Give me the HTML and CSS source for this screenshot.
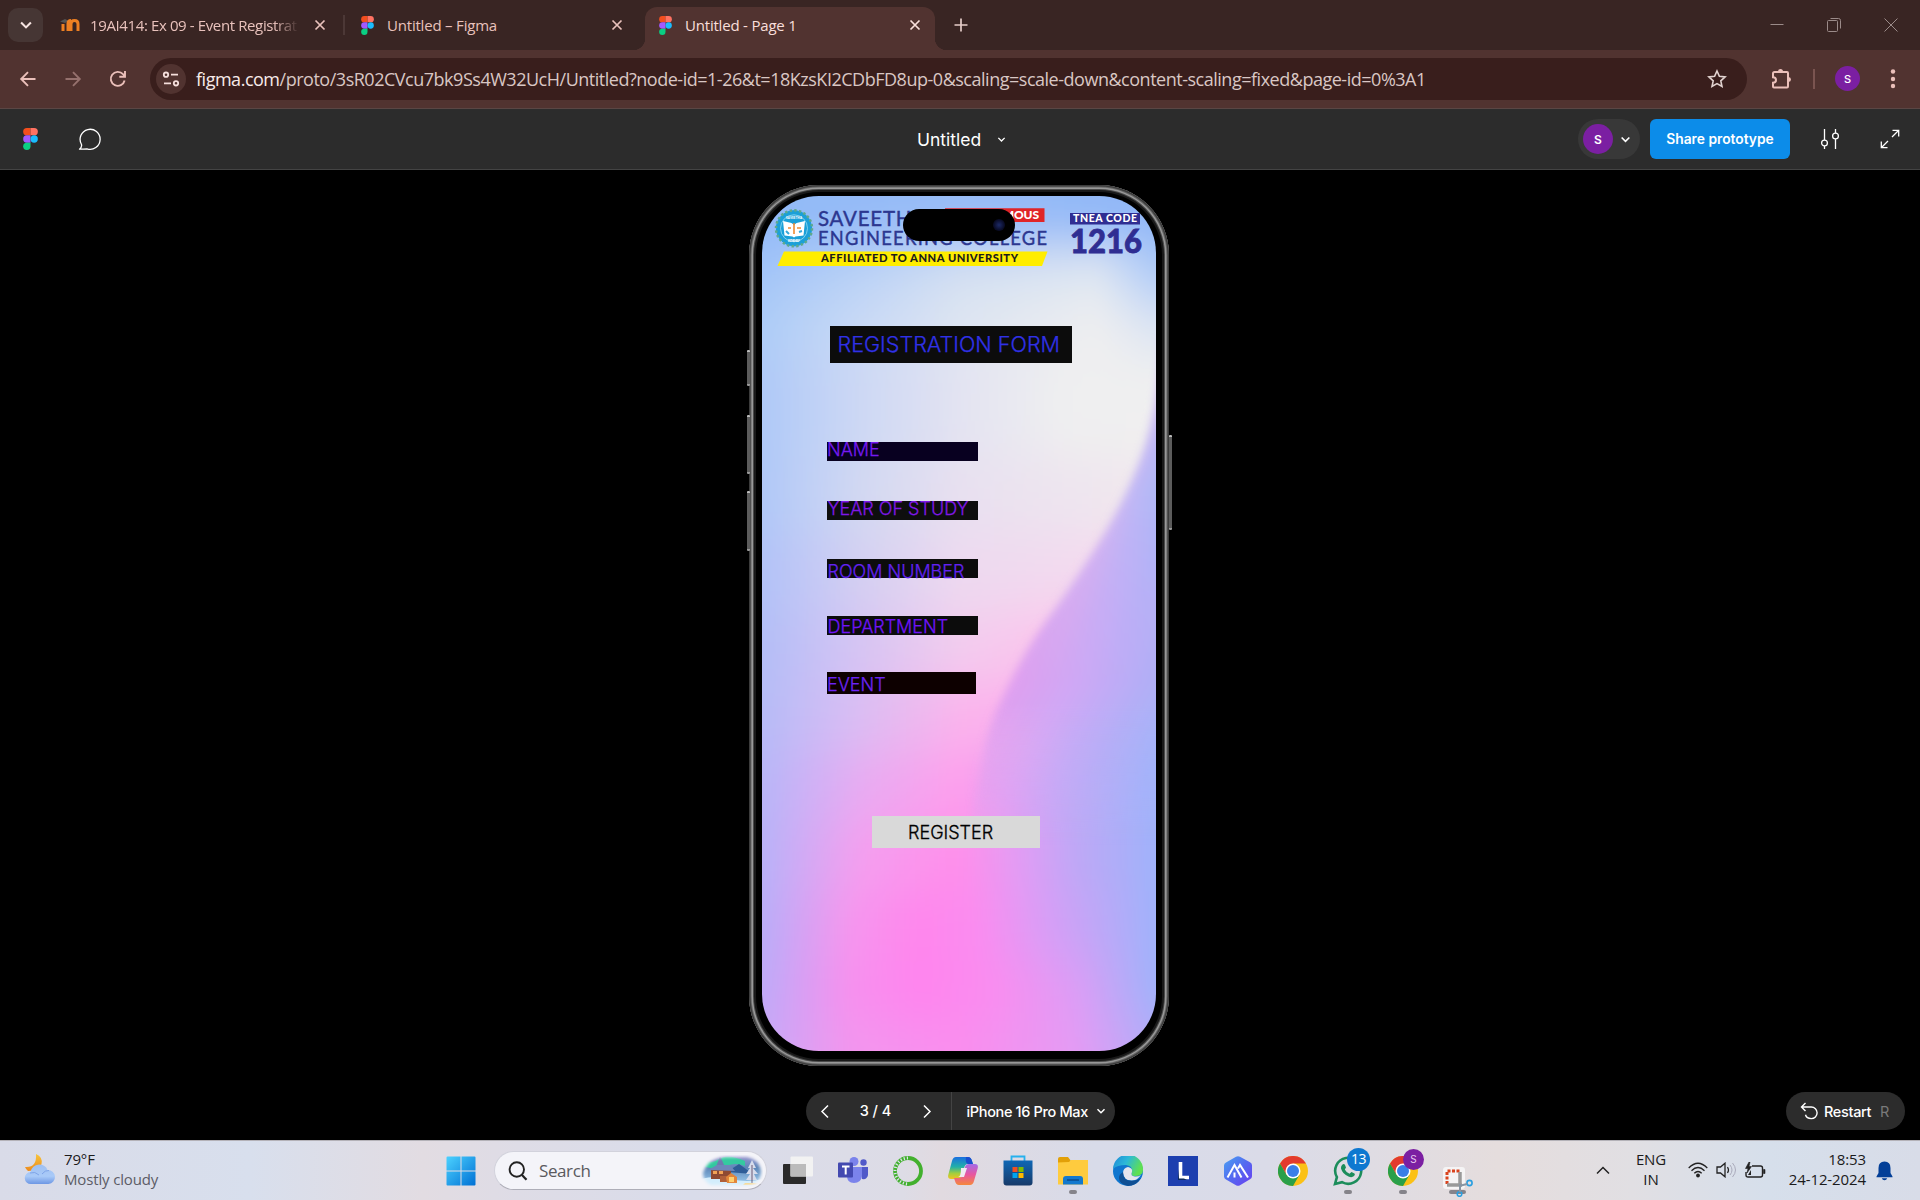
FILE: index.html
```html
<!DOCTYPE html>
<html lang="en">
<head>
<meta charset="utf-8">
<title>Untitled - Page 1</title>
<link rel="stylesheet" href="styles.css">
</head>
<body>
<svg class="defs" width="0" height="0" aria-hidden="true">
  <symbol id="figma" viewBox="0 0 14 21">
    <path d="M3.500 0H7v7H3.500a3.500 3.500 0 0 1 0-7z" fill="#f24e1e"/>
    <path d="M7 0h3.500a3.500 3.500 0 0 1 0 7H7z" fill="#ff7262"/>
    <path d="M3.500 7H7v7H3.500a3.500 3.500 0 0 1 0-7z" fill="#a259ff"/>
    <circle cx="10.500" cy="10.500" r="3.500" fill="#1abcfe"/>
    <path d="M3.500 14H7v3.500a3.500 3.500 0 1 1-3.500-3.500z" fill="#0acf83"/>
  </symbol>
  <symbol id="close" viewBox="0 0 12 12"><path d="M1.500 1.500l9 9M10.500 1.500l-9 9" stroke="currentColor" stroke-width="1.700" fill="none"/></symbol>
  <symbol id="chev" viewBox="0 0 10 10"><path d="M1.500 3.200L5 6.700l3.500-3.500" stroke="currentColor" stroke-width="1.500" fill="none"/></symbol>
  <symbol id="chrome" viewBox="0 0 30 30">
    <circle cx="15" cy="15" r="15" fill="#fbc116"/>
    <path d="M2 7.500A15 15 0 0 1 28 7.500H15L8.500 18.700z" fill="#e33b2e"/>
    <path d="M2 7.500L8.500 18.700 21.500 18.700 15 30A15 15 0 0 1 2 7.500z" fill="#2a9f49"/>
    <circle cx="15" cy="15" r="7.500" fill="#fff"/><circle cx="15" cy="15" r="6" fill="#3a7ee8"/>
  </symbol>
</svg>

<header class="tabs">
  <button class="tab-search"><svg width="14" height="14"><use href="#chev"/></svg></button>
  <div class="tab tab-one">
    <svg class="fav" width="20" height="14" viewBox="0 0 20 14"><path d="M0 3.500L5 1l4 2-4 2z" fill="#555"/><path d="M3 13V6M8 13V5.500q0-3 3-3M11 13V6q0-3.500 3.500-3.500T18 6v7" stroke="#ef8022" stroke-width="3" fill="none"/></svg>
    <span class="title fade">19AI414: Ex 09 - Event Registrat</span>
    <svg class="x" width="12" height="12"><use href="#close"/></svg>
  </div>
  <i class="tab-sep"></i>
  <div class="tab tab-two">
    <svg width="13" height="19"><use href="#figma"/></svg>
    <span class="title">Untitled – Figma</span>
    <svg class="x" width="12" height="12"><use href="#close"/></svg>
  </div>
  <div class="tab active">
    <svg width="13" height="19"><use href="#figma"/></svg>
    <span class="title">Untitled - Page 1</span>
    <svg class="x" width="12" height="12"><use href="#close"/></svg>
  </div>
  <svg class="plus" width="14" height="14" viewBox="0 0 14 14"><path d="M7 0.500v13M0.500 7h13" stroke="currentColor" stroke-width="1.700"/></svg>
  <div class="win">
    <svg width="14" height="14" viewBox="0 0 14 14"><path d="M0.500 6.500h13" stroke="currentColor"/></svg>
    <svg width="14" height="14" viewBox="0 0 14 14"><path d="M0.500 3.500q0-1 1-1h8q1 0 1 1v9q0 1-1 1h-8q-1 0-1-1zM3.500 0.500h8q2 0 2 2v8" stroke="currentColor" fill="none"/></svg>
    <svg width="14" height="14" viewBox="0 0 14 14"><path d="M0.500 0.500l13 13M13.500 0.500l-13 13" stroke="currentColor"/></svg>
  </div>
</header>

<nav class="toolbar">
  <svg class="nav-ic" width="18" height="18" viewBox="0 0 18 18"><path d="M16.500 9H2.500M9 2.200L2.200 9 9 15.800" stroke="currentColor" stroke-width="1.900" fill="none"/></svg>
  <svg class="nav-ic dim" width="18" height="18" viewBox="0 0 18 18"><path d="M1.500 9h14M9 2.200L15.800 9 9 15.800" stroke="currentColor" stroke-width="1.900" fill="none"/></svg>
  <svg class="nav-ic" width="18" height="18" viewBox="0 0 18 18"><path d="M15.600 10.500A7 7 0 1 1 14 4.200L15.700 6M16 1v5.700h-5.700" stroke="currentColor" stroke-width="1.900" fill="none"/></svg>
  <div class="omnibox">
    <span class="site"><svg width="18" height="16" viewBox="0 0 18 16"><g stroke="currentColor" stroke-width="1.800" fill="none"><circle cx="4" cy="3.700" r="2.200"/><path d="M9 3.700h7M2 12.300h7"/><circle cx="14" cy="12.300" r="2.200"/></g></svg></span>
    <span class="url"><b>figma.com</b>/proto/3sR02CVcu7bk9Ss4W32UcH/Untitled?node-id=1-26&amp;t=18KzsKI2CDbFD8up-0&amp;scaling=scale-down&amp;content-scaling=fixed&amp;page-id=0%3A1</span>
    <svg class="star" width="20" height="20" viewBox="0 0 20 20"><path d="M10 2l2.400 5.300 5.700.6-4.300 3.900 1.200 5.700-5-2.900-5 2.900 1.200-5.700L1.900 7.900l5.700-.6z" stroke="currentColor" stroke-width="1.600" fill="none"/></svg>
  </div>
  <svg class="puzzle" width="22" height="22" viewBox="0 0 22 22"><path d="M3 5.500q0-1.500 1.500-1.500h12.500q1 0 1 1v13.500q0 1-1 1H4q-1 0-1-1v-3.700q3 0 3-2.800t-3-2.800z" stroke="currentColor" stroke-width="2" fill="none"/><path d="M8 3.500a2.500 2.500 0 0 1 5 0zM18.500 9a2.500 2.500 0 0 1 0 5z" fill="currentColor"/></svg>
  <i class="tool-sep"></i>
  <span class="avatar small">S</span>
  <svg class="dots" width="6" height="20" viewBox="0 0 6 20" fill="currentColor"><circle cx="3" cy="2.500" r="2.200"/><circle cx="3" cy="10" r="2.200"/><circle cx="3" cy="17" r="2.200"/></svg>
</nav>

<section class="figbar">
  <div class="fig-left">
    <svg width="15" height="22"><use href="#figma"/></svg>
    <svg width="24" height="24" viewBox="0 0 24 24"><path d="M1.500 22.200q2.800-2.500 1.900-5A10 10 0 1 1 9 21.800q-3 .2-7.500.4z" stroke="#fff" stroke-width="1.300" fill="none" stroke-linejoin="round"/></svg>
  </div>
  <div class="fig-title">Untitled <svg width="9" height="9"><use href="#chev"/></svg></div>
  <div class="fig-right">
    <div class="user"><span class="avatar">S</span><svg width="11" height="11"><use href="#chev"/></svg></div>
    <button class="share">Share prototype</button>
    <svg class="sliders" width="20" height="22" viewBox="0 0 20 22"><g stroke="#fff" stroke-width="1.300" fill="none"><path d="M4.500 1v11M4.500 18v3M15.500 1v4M15.500 11v10"/><circle cx="4.500" cy="15" r="2.900"/><circle cx="15.500" cy="8" r="2.900"/></g></svg>
    <svg width="20" height="20" viewBox="0 0 20 20"><path d="M12 8l6.500-6.500M12.500 1.300h6.200v6.200M8 12l-6.500 6.500M1.300 12.500v6.200h6.200" stroke="#fff" stroke-width="1.300" fill="none"/></svg>
  </div>
</section>

<main class="stage">
  <div class="phone">
    <i class="key k1"></i><i class="key k2"></i><i class="key k3"></i><i class="key k4"></i>
    <div class="screen">
      <svg class="wall" width="394" height="856" viewBox="0 0 394 856" preserveAspectRatio="none">
        <defs>
          <filter id="rowblur" filterUnits="userSpaceOnUse" x="-40" y="-200" width="480" height="1260"><feGaussianBlur stdDeviation="10 24"/></filter>
          <filter id="edge" filterUnits="userSpaceOnUse" x="100" y="50" width="400" height="700"><feGaussianBlur stdDeviation="4"/></filter>
          <linearGradient id="r0" gradientUnits="userSpaceOnUse" x1="0" x2="394"><stop offset="0" stop-color="#91b9f8"/><stop offset=".5" stop-color="#98bcf7"/><stop offset="1" stop-color="#8fb6f8"/></linearGradient>
          <linearGradient id="r1" gradientUnits="userSpaceOnUse" x1="0" x2="394"><stop offset="0" stop-color="#a3c5f8"/><stop offset=".25" stop-color="#bad2f6"/><stop offset=".5" stop-color="#d4e0f2"/><stop offset=".85" stop-color="#dfe7f2"/><stop offset="1" stop-color="#b0ccf7"/></linearGradient>
          <linearGradient id="r2" gradientUnits="userSpaceOnUse" x1="0" x2="394"><stop offset="0" stop-color="#aecdf8"/><stop offset=".25" stop-color="#cadaf5"/><stop offset=".5" stop-color="#dee5f2"/><stop offset=".85" stop-color="#eeeef0"/><stop offset="1" stop-color="#dde5f3"/></linearGradient>
          <linearGradient id="r3" gradientUnits="userSpaceOnUse" x1="0" x2="394"><stop offset="0" stop-color="#afc9f8"/><stop offset=".25" stop-color="#cdd8f4"/><stop offset=".5" stop-color="#e3e3f2"/><stop offset=".78" stop-color="#efeff0"/><stop offset="1" stop-color="#f0f0f0"/></linearGradient>
          <linearGradient id="r4" gradientUnits="userSpaceOnUse" x1="0" x2="394"><stop offset="0" stop-color="#b0c8f8"/><stop offset=".25" stop-color="#d2d8f2"/><stop offset=".5" stop-color="#e8e0f0"/><stop offset="1" stop-color="#f2e8ee"/></linearGradient>
          <linearGradient id="r5" gradientUnits="userSpaceOnUse" x1="0" x2="394"><stop offset="0" stop-color="#b2c2f8"/><stop offset=".25" stop-color="#d4cff2"/><stop offset=".5" stop-color="#edd9f0"/><stop offset="1" stop-color="#f8daee"/></linearGradient>
          <linearGradient id="r6" gradientUnits="userSpaceOnUse" x1="0" x2="394"><stop offset="0" stop-color="#b3bef7"/><stop offset=".25" stop-color="#d6c4f3"/><stop offset=".5" stop-color="#f2ccee"/><stop offset=".75" stop-color="#fdc4ec"/><stop offset=".88" stop-color="#d0b8f4"/><stop offset="1" stop-color="#a3b4fa"/></linearGradient>
          <linearGradient id="r7" gradientUnits="userSpaceOnUse" x1="0" x2="394"><stop offset="0" stop-color="#b6bbf7"/><stop offset=".25" stop-color="#dbbdf3"/><stop offset=".5" stop-color="#fab4ec"/><stop offset=".64" stop-color="#fcb0ec"/><stop offset=".78" stop-color="#c8acf5"/><stop offset="1" stop-color="#a3b2fa"/></linearGradient>
          <linearGradient id="r8" gradientUnits="userSpaceOnUse" x1="0" x2="394"><stop offset="0" stop-color="#b8b6f8"/><stop offset=".25" stop-color="#e7abf2"/><stop offset=".5" stop-color="#fe9fec"/><stop offset=".62" stop-color="#e8a0f2"/><stop offset=".75" stop-color="#cba8f6"/><stop offset="1" stop-color="#a3b2fa"/></linearGradient>
          <linearGradient id="r9" gradientUnits="userSpaceOnUse" x1="0" x2="394"><stop offset="0" stop-color="#b8b2f8"/><stop offset=".25" stop-color="#f49fef"/><stop offset=".5" stop-color="#ff8eea"/><stop offset=".65" stop-color="#e29cf4"/><stop offset=".8" stop-color="#bda8f6"/><stop offset="1" stop-color="#9fb2fa"/></linearGradient>
          <linearGradient id="r10" gradientUnits="userSpaceOnUse" x1="0" x2="394"><stop offset="0" stop-color="#b9adf8"/><stop offset=".22" stop-color="#f596ee"/><stop offset=".4" stop-color="#ff86ec"/><stop offset=".55" stop-color="#fa8cf0"/><stop offset=".7" stop-color="#dc9cf5"/><stop offset="1" stop-color="#a0b2fa"/></linearGradient>
          <linearGradient id="r11" gradientUnits="userSpaceOnUse" x1="0" x2="394"><stop offset="0" stop-color="#bfaaf8"/><stop offset=".22" stop-color="#f690ee"/><stop offset=".4" stop-color="#ff84ee"/><stop offset=".6" stop-color="#f98df0"/><stop offset=".8" stop-color="#dc9df5"/><stop offset="1" stop-color="#a0b2fa"/></linearGradient>
          <linearGradient id="r12" gradientUnits="userSpaceOnUse" x1="0" x2="394"><stop offset="0" stop-color="#c8a9f7"/><stop offset=".22" stop-color="#f296ee"/><stop offset=".5" stop-color="#fa8eee"/><stop offset=".8" stop-color="#e49bf4"/><stop offset="1" stop-color="#b4acf8"/></linearGradient>
          <linearGradient id="side" gradientUnits="userSpaceOnUse" x1="240" y1="500" x2="390" y2="580"><stop offset="0" stop-color="#e09fef"/><stop offset=".35" stop-color="#cfa8f5"/><stop offset=".7" stop-color="#b4aef6"/><stop offset="1" stop-color="#a2b4f9"/></linearGradient>
          <linearGradient id="sidetop" gradientUnits="userSpaceOnUse" x1="345" y1="330" x2="396" y2="350"><stop offset="0" stop-color="#cbb8f2"/><stop offset=".45" stop-color="#b6b8f6"/><stop offset="1" stop-color="#a6b8f8"/></linearGradient>
          <linearGradient id="topfade" x1="0" y1="0" x2="0" y2="1"><stop offset="0" stop-color="#fff"/><stop offset=".5" stop-color="#fff"/><stop offset="1" stop-color="#000"/></linearGradient>
          <mask id="tm"><rect x="180" y="100" width="260" height="390" fill="url(#topfade)"/></mask>
          <linearGradient id="fadey" x1="0" y1="0" x2="0" y2="1"><stop offset="0" stop-color="#fff"/><stop offset=".74" stop-color="#fff"/><stop offset="1" stop-color="#000"/></linearGradient>
          <mask id="fade"><rect x="180" y="100" width="260" height="550" fill="url(#fadey)"/></mask>
        </defs>
        <g filter="url(#rowblur)">
          <rect x="-60" y="-200" width="520" height="252" fill="url(#r0)"/>
          <rect x="-60" y="50" width="520" height="57" fill="url(#r1)"/>
          <rect x="-60" y="105" width="520" height="57" fill="url(#r2)"/>
          <rect x="-60" y="160" width="520" height="102" fill="url(#r3)"/>
          <rect x="-60" y="260" width="520" height="82" fill="url(#r4)"/>
          <rect x="-60" y="340" width="520" height="77" fill="url(#r5)"/>
          <rect x="-60" y="415" width="520" height="72" fill="url(#r6)"/>
          <rect x="-60" y="485" width="520" height="72" fill="url(#r7)"/>
          <rect x="-60" y="555" width="520" height="72" fill="url(#r8)"/>
          <rect x="-60" y="625" width="520" height="72" fill="url(#r9)"/>
          <rect x="-60" y="695" width="520" height="72" fill="url(#r10)"/>
          <rect x="-60" y="765" width="520" height="62" fill="url(#r11)"/>
          <rect x="-60" y="825" width="520" height="240" fill="url(#r12)"/>
        </g>
        <g mask="url(#fade)"><g filter="url(#edge)">
          <path d="M400 140C397 200 390 235 376 270S345 335 326 364Q306 396 285 424T240 503Q226 530 222 560L212 610V660H450V140z" fill="url(#side)"/>
          <path d="M400 140C397 200 390 235 376 270S345 335 326 364Q306 396 285 424L260 465V490H450V140z" fill="url(#sidetop)" mask="url(#tm)"/>
        </g></g>
      </svg>
      <svg class="banner" width="394" height="80" viewBox="762 196 394 80">
        <circle cx="794" cy="228.300" r="17.600" fill="#1ba0d8" stroke="#1ba0d8"/>
        <circle cx="794" cy="228.300" r="18" fill="none" stroke="#5fa98c" stroke-width="2.500" stroke-dasharray="2.350 2.350"/>
        <circle cx="794" cy="228.300" r="13.500" fill="none" stroke="#9adcf2" stroke-width=".8"/>
        <path d="M783 221l8.500 2 2.500 2 2.500-2 8.500-2-1.500 14.500-8 1-1.500 1-1.500-1-8-1z" fill="#fff"/>
        <path d="M794 223v11M788 228h3M797 228h4" stroke="#ee8a33" stroke-width="1.600"/><path d="M786 231l3 3M799 232l3-1" stroke="#38a8d8" stroke-width="2"/>
        <text x="786" y="218.500" class="seal" textLength="16">SAVEETHA</text><text x="788" y="241.500" class="seal" textLength="12">IN THE HELP</text>
        <text x="818" y="226" class="college" textLength="108" lengthAdjust="spacing">SAVEETHA</text>
        <text x="818" y="245" class="college second" textLength="229" lengthAdjust="spacing">ENGINEERING COLLEGE</text>
        <path d="M945 208.300h99.500v13.700H945z" fill="#e02528"/>
        <text x="951" y="219.300" class="auto" textLength="88">AUTONOMOUS</text>
        <path d="M784 251.500h263.500l-5.500 14.500H777.500z" fill="#ffed00"/>
        <text x="821" y="262.300" class="affil" textLength="197" lengthAdjust="spacing">AFFILIATED TO ANNA UNIVERSITY</text>
        <path d="M1070 213h70v11.500h-70z" fill="#2f2d92"/>
        <text x="1073" y="222.200" class="tnea" textLength="64">TNEA CODE</text>
        <text x="1070" y="252.600" class="code" textLength="72" lengthAdjust="spacingAndGlyphs">1216</text>
      </svg>
      <h1 class="form-title">REGISTRATION FORM</h1>
      <div class="field name">NAME</div>
      <div class="field year">YEAR OF STUDY</div>
      <div class="field room">ROOM NUMBER</div>
      <div class="field dept">DEPARTMENT</div>
      <div class="field event">EVENT</div>
      <div class="register">REGISTER</div>
      <div class="island"><i></i></div>
    </div>
  </div>
  <footer class="controls">
    <span></span>
    <div class="pager">
      <svg width="18" height="18" viewBox="0 0 18 18"><path d="M12 3.500L6 9.500l6 6" stroke="#fff" stroke-width="1.500" fill="none"/></svg>
      <span class="count">3 / 4</span>
      <svg width="18" height="18" viewBox="0 0 18 18"><path d="M6 3.500l6 6-6 6" stroke="#fff" stroke-width="1.500" fill="none"/></svg>
      <div class="device">iPhone 16 Pro Max <svg width="10" height="10"><use href="#chev"/></svg></div>
    </div>
    <div class="restart"><svg width="19" height="18" viewBox="0 0 19 18"><path d="M5.500 1L1.500 5l4 4M1.500 5h9.800a5.800 5.800 0 0 1 0 11.600q-4.800 0-5.800-3.800" stroke="#fff" stroke-width="1.400" fill="none"/></svg><span>Restart</span><em>R</em></div>
  </footer>
</main>

<footer class="taskbar">
  <div class="weather">
    <svg width="32" height="32" viewBox="0 0 32 32">
      <defs><linearGradient id="cl" x2="0" y2="1"><stop stop-color="#9fc0f2"/><stop offset=".6" stop-color="#a9caf8"/><stop offset="1" stop-color="#6d97e4"/></linearGradient><linearGradient id="mn" x2="0" y2="1"><stop stop-color="#f8c53a"/><stop offset="1" stop-color="#ec8a1e"/></linearGradient></defs>
      <path d="M12 1q7 3 5.500 10T4 18q-2-1.500-3-4 12 1 11-13z" fill="url(#mn)"/>
      <path d="M7 31a6 6 0 0 1-.5-12q1.500-7 8.500-7.500 6.500 0 8.500 5.500a6.800 6.800 0 0 1 1 14z" fill="url(#cl)"/><path d="M6 20q5-2 9 2M18 21q3-4 7-3.500" stroke="#7fa5e8" fill="none"/>
    </svg>
    <div><span class="temp">79°F</span><span class="sky">Mostly cloudy</span></div>
  </div>
  <div class="apps">
    <svg class="start" width="30" height="30" viewBox="0 0 30 30"><defs><linearGradient id="wn" x2="1" y2="1"><stop stop-color="#4cd2ff"/><stop offset="1" stop-color="#0070d4"/></linearGradient></defs><path d="M.5 1.500q0-1 1-1h13v14H.5zM15.500.5h13q1 0 1 1v13h-14zM.5 15.500h14v14h-13q-1 0-1-1zM15.500 15.500h14v13q0 1-1 1h-13z" fill="url(#wn)"/></svg>
    <div class="search">
      <svg width="20" height="20" viewBox="0 0 20 20"><circle cx="8.800" cy="8.500" r="7.200" stroke="#222" stroke-width="1.900" fill="none"/><path d="M14 14l4.500 4.800" stroke="#222" stroke-width="2.200"/></svg>
      <span>Search</span>
      <svg class="art" width="62" height="32" viewBox="0 0 62 32">
        <defs>
          <linearGradient id="sk" x2="0" y2="1"><stop stop-color="#9d97d0"/><stop offset=".4" stop-color="#5c86b8"/><stop offset="1" stop-color="#a9d8f7"/></linearGradient>
          <filter id="soft"><feGaussianBlur stdDeviation="1.500"/></filter>
          <mask id="am"><path d="M8 8Q14 3 24 2h22q12 2 14 14 0 12-12 14H10Q2 26 2 18 4 12 8 8z" fill="#fff" filter="url(#soft)"/></mask>
        </defs>
        <g mask="url(#am)"><path d="M0 0h62v32H0z" fill="url(#sk)"/><path d="M4 4q6 6 14 0t26 2v5q-10-4-18 0T4 12z" fill="#29d49a" opacity=".85"/><path d="M26 17l12-8 14 10z" fill="#2f5d97"/><path d="M0 24q14-4 30 0t32 0v10H0z" fill="#d3edfc"/>
        <path d="M19 1l5 11h-9z" fill="#6f7bb0"/><path d="M10 14h20v10H10z" fill="#8f4a32"/><path d="M7 15l9-5h13l5 6z" fill="#6f86ba"/><path d="M12 16h4v3h-4zM18 16h4v3h-4z" fill="#f2a355"/><path d="M19 21h8v6h-8z" fill="#b0603a"/><path d="M25 22l5-4 6 4v6H26z" fill="#e2853a"/><path d="M28 22h5v5h-5z" fill="#ffd070"/><path d="M51 5l4 8h-3l5 6h-4l3 6H45l4-6h-4l4-6h-2z" fill="#d6dcec"/><path d="M51 10v18" stroke="#6d5b74"/><path d="M44 28h14l2 2H42z" fill="#f3d78e"/></g>
      </svg>
    </div>
    <div class="app"><svg width="30" height="30" viewBox="0 0 30 30"><rect y="8" width="23" height="20" rx="1" fill="#2a2a2a"/><rect x="7.500" y=".5" width="22.500" height="20" rx="1" fill="#f2f2f2"/><path d="M7.500 8H23v12.500H7.500z" fill="#bbb"/></svg></div>
    <div class="app"><svg width="30" height="30" viewBox="0 0 30 30"><circle cx="16" cy="5.500" r="4.500" fill="#7b83eb"/><circle cx="25.500" cy="6.500" r="3.200" fill="#5059c9"/><path d="M22 11h8v8q-1 5-6 4z" fill="#5059c9"/><path d="M9 11h15v9q-1 7-8 7t-7-7z" fill="#7b83eb"/><rect y="6.500" width="15" height="15" rx="1" fill="#4349b0"/><path d="M4 10.500h7.500M7.700 10.500v8" stroke="#fff" stroke-width="2"/></svg></div>
    <div class="app"><svg width="30" height="30" viewBox="0 0 30 30"><circle cx="15" cy="15" r="13" fill="none" stroke="#42b02e" stroke-width="3.800"/><path d="M15 2A13 13 0 0 0 15 28" fill="none" stroke="#dde2ec" stroke-width="3" stroke-dasharray="1.200 2"/></svg></div>
    <div class="app"><svg width="30" height="30" viewBox="0 0 30 30"><defs><linearGradient id="c1" x2="0" y2="1"><stop stop-color="#1b6fe0"/><stop offset=".45" stop-color="#22b0a8"/><stop offset=".75" stop-color="#a5cf3c"/><stop offset="1" stop-color="#f2c321"/></linearGradient><linearGradient id="c2" x2="0" y2="1"><stop stop-color="#a36be8"/><stop offset=".5" stop-color="#e856a0"/><stop offset="1" stop-color="#f5883c"/></linearGradient></defs><path d="M8 1h12q3 0 4 4l1 3h-5q-3 0-4 4l-2 8q-1 3-4 3H3q-4 0-2.500-5L4 5q1-4 4-4z" fill="url(#c1)"/><path d="M18 1h2q3 0 4 4l1 3h-5q-3-1-2-7z" fill="#1a4fcf"/><path d="M22 29H11q-3 0-4-4l-1-3h5q3 0 4-4l2-7q1-3 4-3h6q4 0 2.500 5L26 25q-1 4-4 4z" fill="url(#c2)"/><path d="M13 12h6l-3 9h-6q3 0 3-9z" fill="#f0ecf4"/></svg></div>
    <div class="app"><svg width="30" height="31" viewBox="0 0 30 31"><defs><linearGradient id="st" x2="0" y2="1"><stop stop-color="#0f67b5"/><stop offset="1" stop-color="#173a69"/></linearGradient></defs><path d="M8.500 6V1.500h13V6" stroke="#26b1ee" stroke-width="1.800" fill="none"/><path d="M.5 5.500h29v22q0 3-3 3h-23q-3 0-3-3z" fill="url(#st)"/><path d="M9.500 12h5v5h-5z" fill="#f25022"/><path d="M15.500 12h5v5h-5z" fill="#7fba00"/><path d="M9.500 18h5v5h-5z" fill="#00a4ef"/><path d="M15.500 18h5v5h-5z" fill="#ffb900"/></svg></div>
    <div class="app run"><svg width="30" height="28" viewBox="0 0 30 28"><path d="M0 2q0-2 2-2h8l3 4v6H0z" fill="#e2a008"/><path d="M0 5.500l11-.5 2-2h17v24.500H0z" fill="#fecb3e"/><path d="M5 27.500V22q0-3 3-3h14q3 0 3 3v5.500z" fill="#1379ce"/><path d="M9 23h12" stroke="#0b4b8c" stroke-width="1.500"/></svg></div>
    <div class="app"><svg width="30" height="30" viewBox="0 0 30 30"><defs><linearGradient id="e1" x2="1" y2=".4"><stop stop-color="#1f86d8"/><stop offset=".5" stop-color="#2cb8d8"/><stop offset="1" stop-color="#5fe052"/></linearGradient></defs><circle cx="15" cy="15" r="15" fill="#0f76cf"/><path d="M0 13A15 15 0 0 1 30 14q0 6-8 6-5 0-3-4 1-6-6-7-9 0-13 4z" fill="url(#e1)"/><path d="M10 17q0-5 5-6 5 1 4 5-2 4 3 4.500 4 0 6-1.500-4 6-10 5.500-7 0-8-7.500z" fill="#e4e4ee"/><path d="M10 16q0 9 9 8.700 5 0 9-2.700-5 8-13 8-9-2-9-8 0-4 4-6z" fill="#0f4f94"/></svg></div>
    <div class="app"><svg width="30" height="30" viewBox="0 0 30 30"><path d="M0 0h30v30H0z" fill="#1d3faf"/><path d="M12.500 6v15.500H21" stroke="#fff" stroke-width="3.600" fill="none"/><path d="M10 13v11h9l-3-1.500h-5z" fill="#0d2b5e"/></svg></div>
    <div class="app"><svg width="28" height="30" viewBox="0 0 28 30"><defs><linearGradient id="hx" x2="1" y2="1"><stop stop-color="#4aa2f2"/><stop offset=".5" stop-color="#546af0"/><stop offset="1" stop-color="#6a3df0"/></linearGradient></defs><path d="M12 .7q2-1 4 0l10 5.500q2 1 2 3v11q0 2-2 3l-10 6q-2 1-4 0L2 23.500q-2-1-2-3v-11q0-2 2-3z" fill="url(#hx)"/><path d="M3.500 21.500L10.500 9l7 12.500M14 12.500L16 9l8 12.500M10.500 21.500v-5" stroke="#fff" stroke-width="2" fill="none"/></svg></div>
    <div class="app"><svg width="30" height="30"><use href="#chrome"/></svg></div>
    <div class="app run"><svg width="30" height="30" viewBox="0 0 30 30"><path d="M2 28l1.900-6.800A13 13 0 1 1 9 26.200z" fill="none" stroke="#1c8d5b" stroke-width="2.600"/><path d="M9 9q2-2 3 0l1 2.500-1.200 2q1.500 3 4.700 4.300l2-1.800 3 1.500q1 1-.5 2.500-2 2-5.500.5-6-2.500-7.500-8-.3-2 1-3.500z" fill="#1c8d5b"/></svg><span class="badge blue">13</span></div>
    <div class="app run"><svg width="30" height="30"><use href="#chrome"/></svg><span class="badge purple">S</span></div>
    <div class="app run wide snip"><svg width="30" height="30" viewBox="0 0 30 30"><rect width="22" height="22" rx="3" fill="#f5f4f5"/><path d="M4 17V4h13" fill="none" stroke="#d9431e" stroke-width="3" stroke-dasharray="3 1.500"/><path d="M17 5v14M4 18h15" stroke="#999" stroke-width="3.500"/><circle cx="26.500" cy="16" r="2.600" fill="none" stroke="#2a9fe0" stroke-width="1.600"/><circle cx="16.500" cy="27" r="2.300" fill="none" stroke="#2a9fe0" stroke-width="1.600"/><path d="M16 19l8-2M17 17v8" stroke="#8795a3" stroke-width="2"/></svg></div>
  </div>
  <div class="tray">
    <svg width="14" height="9" viewBox="0 0 14 9"><path d="M1 7.500l6-6 6 6" stroke="#222" stroke-width="1.500" fill="none"/></svg>
    <div class="lang"><span>ENG</span><span>IN</span></div>
    <div class="status">
      <svg width="20" height="16" viewBox="0 0 20 16"><g stroke="#222" stroke-width="1.300" fill="none"><path d="M.7 6Q10-3.500 19.300 6M3.500 8.700Q10 2.300 16.500 8.700M6.300 11.300Q10 7.700 13.700 11.300"/></g><circle cx="10" cy="13.500" r="1.900" fill="#222"/></svg>
      <svg width="21" height="16" viewBox="0 0 21 16"><path d="M1 5h3.500L9 1.200v13.600L4.500 11H1z" stroke="#222" stroke-width="1.300" fill="none"/><path d="M11.500 5q2 3 0 6" stroke="#222" stroke-width="1.200" fill="none"/><path d="M14 3q4 5 0 10M16.500 1q6 7 0 14" stroke="#aab" fill="none"/></svg>
      <svg width="21" height="17" viewBox="0 0 21 17"><path d="M7 4h8.500q2 0 2 2v7q0 2-2 2H3q-2 0-2-2v-3" stroke="#222" stroke-width="1.400" fill="none"/><path d="M18.500 7.500h1.500v4h-1.500zM4 0L.5 6.500H3L2 11l4.500-6.500H4L5 0z" fill="#222" stroke="#222" stroke-width=".6"/><path d="M3 13l3-5v5z" fill="#222"/></svg>
    </div>
    <div class="clock"><span>18:53</span><span>24-12-2024</span></div>
    <svg class="bell" width="17" height="20" viewBox="0 0 17 20"><path d="M8.500.5q6 0 6 6.500v5l2 3.500v.7H.5v-.7l2-3.500V7q0-6.500 6-6.500zM5.800 17.300h5.400q-.7 2-2.700 2t-2.700-2z" fill="#033f98"/></svg>
  </div>
</footer>
</body>
</html>
```
FILE: styles.css
```css
* { box-sizing: border-box; }
body { margin: 0; width: 1920px; height: 1200px; overflow: hidden; display: flex; flex-direction: column; background: #000; font-family: "Open Sans", "Noto Sans", sans-serif; color: #fff; }
svg { display: block; flex: none; }
.defs { position: absolute; }
button { border: 0; padding: 0; font: inherit; color: inherit; }
i, em, b { font-style: normal; font-weight: 400; }

/* tab strip */
.tabs { height: 50px; background: #392523; display: flex; align-items: flex-start; color: #e9c2bc; padding-left: 8px; }
.tab-search { width: 35px; height: 34px; margin-top: 8px; border-radius: 10px; background: #463634; color: #f6e4e1; display: flex; align-items: center; justify-content: center; }
.tab { height: 36px; margin-top: 7px; display: flex; align-items: center; font-size: 15px; }
.title { white-space: nowrap; letter-spacing: -.2px; line-height: 20px; }
.x { margin-left: auto; }
.tab-one { width: 266px; margin-left: 17px; }
.tab-one .title { width: 209px; margin-left: 10px; overflow: hidden; letter-spacing: -.38px; }
.fade { -webkit-mask: linear-gradient(90deg, #000 88%, transparent); mask: linear-gradient(90deg, #000 88%, transparent); }
.tab-sep { width: 2px; height: 20px; margin: 15px 0 0 17px; background: #4c3836; }
.tab-two { width: 262px; margin-left: 16px; }
.tab-two .title, .active .title { margin-left: 13px; }
.active { width: 290px; height: 43px; margin-left: 22px; padding: 0 14px 7px 14px; background: #513330; border-radius: 12px 12px 0 0; color: #f9dfdb; position: relative; }
.active::before, .active::after { content: ""; position: absolute; bottom: 0; width: 12px; height: 12px; }
.active::before { left: -12px; background: radial-gradient(circle at 0 0, transparent 12px, #513330 12.5px); }
.active::after { right: -12px; background: radial-gradient(circle at 100% 0, transparent 12px, #513330 12.5px); }
.plus { margin: 18px 0 0 19px; color: #e6cdc9; }
.win { display: flex; gap: 43px; margin: 18px 22px 0 auto; color: #9b8b89; }

/* toolbar */
.toolbar { height: 59px; background: #513330; border-bottom: 1px solid #5a4644; display: flex; align-items: center; padding: 0 24px 1px 19px; color: #ebc0ba; }
.nav-ic { margin-right: 27px; }
.dim { color: #95716d; }
.omnibox { width: 1597px; height: 42px; margin-left: -4px; border-radius: 21px; background: #391e1c; display: flex; align-items: center; padding: 0 20px 0 6px; color: #e2d3d0; }
.site { width: 30px; height: 30px; border-radius: 50%; background: #513330; display: flex; align-items: center; justify-content: center; color: #f5dfdc; }
.url { margin-left: 10px; font-size: 18px; letter-spacing: -.482px; white-space: nowrap; color: #d9c7c4; }
.url b { color: #f8ebe9; }
.star { margin-left: auto; }
.puzzle { margin-left: 23px; }
.tool-sep { width: 2px; height: 20px; background: #7a5450; margin: 0 20px 0 21px; }
.avatar { width: 30px; height: 30px; border-radius: 50%; background: #7b1fa2; font: 600 12px Inter, sans-serif; color: #fff; display: flex; align-items: center; justify-content: center; }
.avatar.small { width: 25px; height: 25px; font-weight: 500; font-size: 11px; }
.dots { margin-left: auto; }

/* prototype bar */
.figbar { height: 61px; background: #2c2c2c; border-bottom: 1px solid #444; display: grid; grid-template-columns: 1fr auto 1fr; align-items: center; font-family: Inter, sans-serif; padding: 0 20px 0 23px; }
.fig-left { display: flex; align-items: center; gap: 40px; }
.fig-title { font-size: 17.500px; display: flex; align-items: center; gap: 16px; }
.fig-right { display: flex; justify-content: flex-end; align-items: center; }
.user { width: 62px; height: 40px; border-radius: 20px; background: #383838; display: flex; align-items: center; gap: 7px; padding-left: 5px; }
.share { width: 140px; height: 40px; margin-left: 10px; border-radius: 6px; background: #0c8ce9; font-size: 13.800px; font-weight: 600; }
.sliders { margin: 0 40px 0 30px; }

/* prototype stage */
.stage { height: 970px; background: #000; display: flex; flex-direction: column; align-items: center; padding-top: 15px; font-family: Inter, sans-serif; }
.phone { width: 420px; height: 881px; margin-right: 2px; border-radius: 70px; padding: 11px 13px 15px; background: #000; position: relative; box-shadow: inset 0 0 0 1.500px #3c3c3c, inset 0 0 0 2.500px #666, inset 0 0 0 4px #989898, inset 0 0 0 5px #4a4a4a, inset 0 0 0 7px #191919; }
.key { position: absolute; width: 3px; background: #5c5c5c; border-radius: 1px; border-top: 2px solid #bbb; border-bottom: 2px solid #999; }
.k1 { left: -2px; top: 165px; height: 36px; }
.k2 { left: -2px; top: 230px; height: 59px; }
.k3 { left: -2px; top: 306px; height: 60px; }
.k4 { right: -3px; top: 250px; height: 95px; }
.screen { width: 394px; height: 855px; border-radius: 57px; overflow: hidden; position: relative; display: grid; grid-template-columns: 394px; grid-template-rows: 80px; grid-auto-rows: min-content; }
/* the wallpaper lies under the whole form */
.wall { position: absolute; left: 0; top: 0; }
.banner, .form-title, .field, .register { position: relative; }
.seal { font: 700 3px "Open Sans", sans-serif; fill: #fff; }
.college { font: 400 20.500px Lato, sans-serif; fill: #2c3790; stroke: #2c3790; stroke-width: .4px; }
.second { font-size: 18.300px; }
.auto { font: 900 12px Lato, sans-serif; fill: #fff; }
.affil { font: 900 11.200px Lato, sans-serif; fill: #1d1d1b; }
.tnea { font: 900 10.500px Lato, sans-serif; fill: #fff; }
.code { font: 900 32.500px Lato, sans-serif; fill: #2f2d92; stroke: #2f2d92; stroke-width: .8px; }
.form-title { margin: 50px 0 79px 67.500px; width: 242.500px; height: 37px; padding-left: 8px; background: #0c0c0c; color: #3031e6; font-size: 21.600px; font-weight: 300; -webkit-text-stroke: .25px; line-height: 36px; white-space: nowrap; }
.field { margin-left: 65px; width: 150.500px; height: 19px; font-size: 18px; font-weight: 300; -webkit-text-stroke: .25px; line-height: 16.500px; white-space: nowrap; }
.name { background: #080020; color: #751af0; margin-bottom: 40px; }
.year { background: #0e0e0e; color: #8018e8; margin-bottom: 39px; padding-left: .5px; }
.room { background: #0c0c0c; color: #6222f0; margin-bottom: 37.500px; line-height: 26px; padding-left: .5px; }
.dept { background: #0c0c0c; color: #7014f8; margin-bottom: 37.500px; line-height: 22px; padding-left: .5px; }
.event { background: #0d0000; color: #6c24f4; width: 149px; height: 22px; line-height: 25px; }
.register { margin: 122px 0 0 110px; width: 168px; height: 32px; padding-left: 36px; background: #d9d9d9; color: #000; font-size: 18px; font-weight: 300; -webkit-text-stroke: .3px; line-height: 33px; }
.island { position: absolute; left: 141px; top: 13px; width: 112px; height: 32px; border-radius: 16px; background: #000; }
.island i { position: absolute; right: 10px; top: 10px; width: 12px; height: 12px; border-radius: 50%; background: radial-gradient(#1d2a66, #0a0d2a 60%, #050510); }

.controls { width: 100%; margin-top: 26px; display: grid; grid-template-columns: 1fr 309px 1fr; align-items: center; font-size: 14.500px; font-weight: 500; }
.pager { height: 38px; border-radius: 19px; background: #2c2c2c; display: flex; align-items: center; padding-left: 10px; }
.count { width: 84px; text-align: center; padding-bottom: 2px; }
.device { height: 38px; flex: 1; margin-left: 15px; padding-left: 15px; border-left: 1px solid #444; display: flex; align-items: center; gap: 8px; letter-spacing: -.35px; white-space: nowrap; }
.restart { justify-self: end; margin-right: 15px; width: 119px; height: 38px; border-radius: 19px; background: #2c2c2c; display: flex; align-items: center; padding-left: 14px; letter-spacing: -.35px; }
.restart span { margin-left: 5px; }
.restart em { margin-left: 9px; color: #7a7a7a; }

/* taskbar */
.taskbar { height: 60px; border-top: 1px solid #b4b2b8; background: linear-gradient(90deg, #d9dbe8 0, #d8dfed 13%, #e2dce2 22%, #dedce6 27%, #d9dcea 36%, #dddce6 47%, #e1dae0 49%, #d8dbe9 57%, #dadbe8 66%, #e5dddd 78%, #e1dfe3 85%, #d6dfeb 92%, #d8dce8 100%); display: grid; grid-template-columns: 446px 1fr 330px; color: #1b1b1b; font-size: 15px; }
.weather { display: flex; padding: 12px 0 0 24px; gap: 8px; line-height: 20px; }
.weather div { margin-top: -3px; }
.weather span { display: block; letter-spacing: -.15px; }
.temp { margin-top: -1px; }
.sky { color: #5c5c66; }
.apps { display: flex; align-items: center; height: 59px; }
.start { margin-right: 18px; }
.search { width: 273px; height: 39px; margin-right: 3px; border-radius: 20px; background: #f4f4f9; border: 1px solid #d2d2dc; border-bottom-color: #aeaeb8; display: flex; align-items: center; padding: 0 3px 0 13px; font-size: 17px; color: #5a5a5e; letter-spacing: -.4px; }
.search span { margin-left: 11px; }
.art { margin-left: auto; }
.app { width: 55px; height: 59px; display: flex; align-items: center; justify-content: center; position: relative; }
.run::after { content: ""; position: absolute; left: 24px; bottom: 6px; width: 8px; height: 4px; border-radius: 2px; background: #85838a; }
.wide::after { left: 19px; width: 17px; }
.snip svg { margin-top: 22px; position: relative; z-index: 1; }
.badge { position: absolute; left: 27px; top: 7px; border-radius: 50%; color: #fff; text-align: center; }
.blue { width: 23px; height: 23px; background: #0e78d0; font-size: 14px; line-height: 22px; letter-spacing: -.5px; }
.purple { width: 21px; height: 21px; left: 28px; top: 8px; background: #7b1fa2; font: 10px/21px Inter, sans-serif; color: #e8c8f0; }
.tray { display: flex; height: 59px; align-items: center; padding: 0 27px 0 6px; line-height: 20px; letter-spacing: -.1px; }
.tray span { display: block; }
.lang, .clock { padding-bottom: 3px; }
.lang { width: 42px; margin-left: 20px; text-align: center; }
.status { display: flex; gap: 8px; margin-left: 16px; }
.clock { margin-left: auto; text-align: right; }
.bell { margin-left: 10px; }
```
